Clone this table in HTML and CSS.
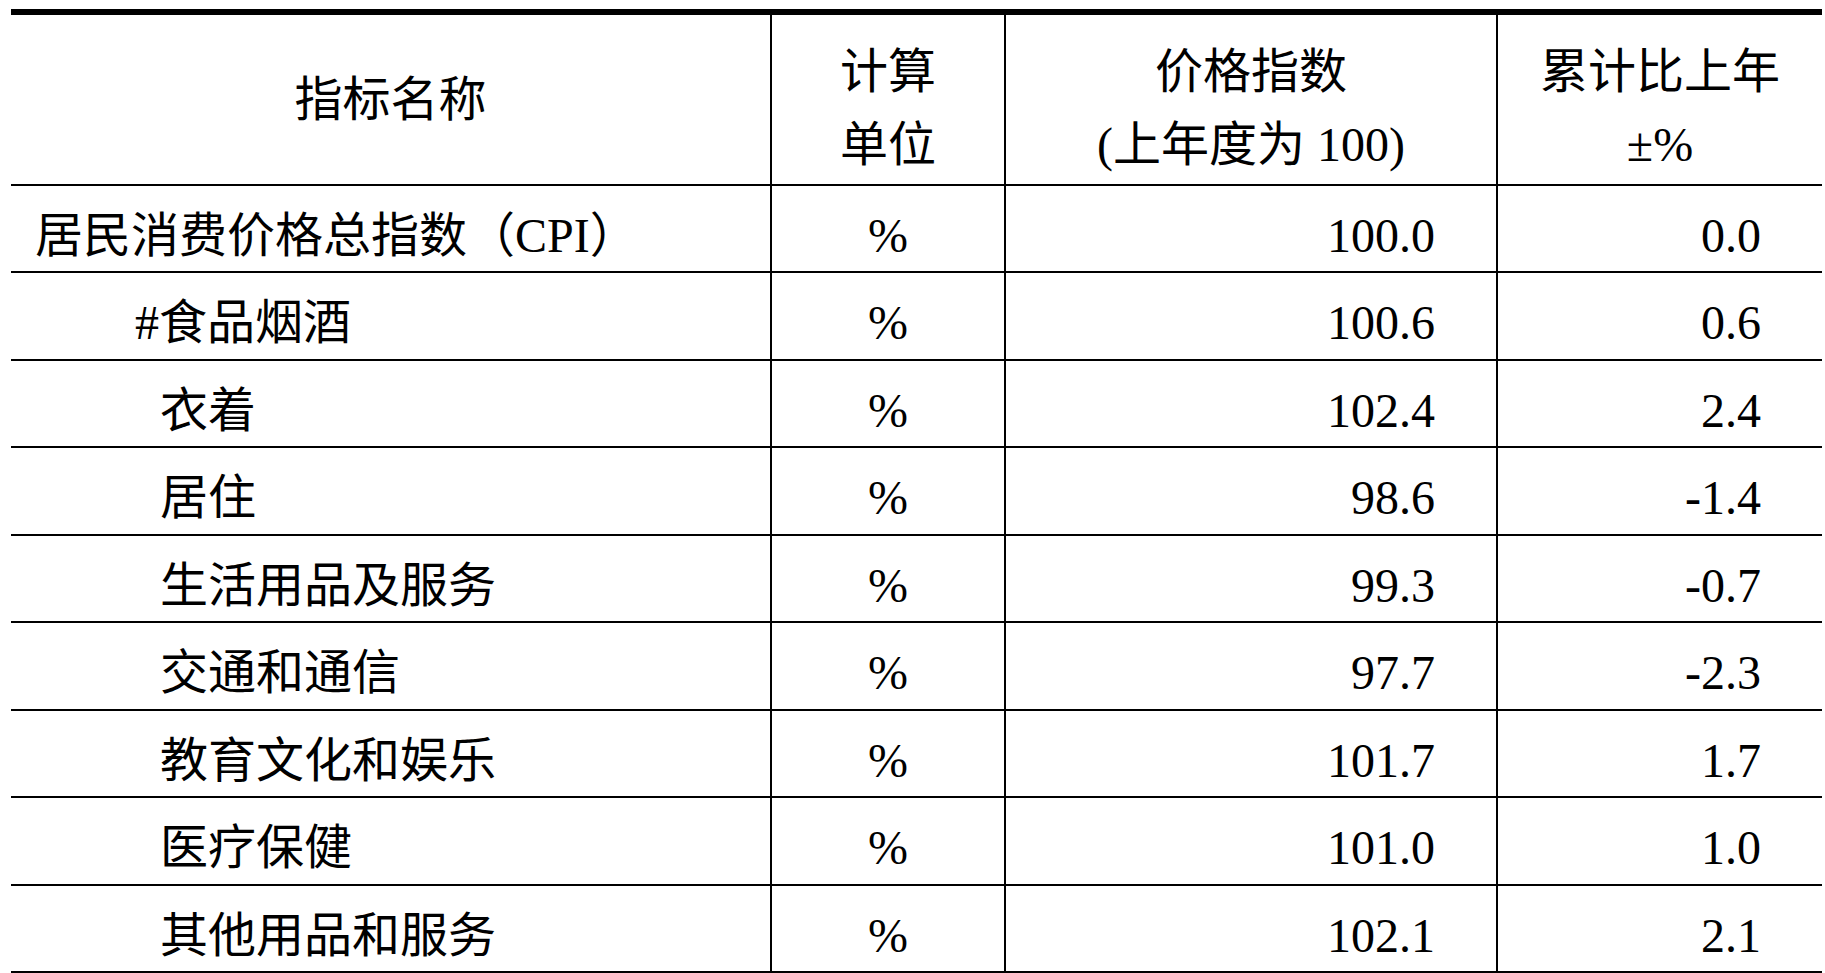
FILE: index.html
```html
<!DOCTYPE html>
<html lang="zh-CN">
<head>
<meta charset="utf-8">
<title>居民消费价格指数</title>
<link rel="stylesheet" href="styles.css">
</head>
<body>
<div class="page">
  <table class="cpi">
    <colgroup>
      <col class="c1"><col class="c2"><col class="c3"><col class="c4">
    </colgroup>
    <thead>
      <tr>
        <th class="name">指标名称</th>
        <th>计算<br>单位</th>
        <th>价格指数<br>(上年度为 100)</th>
        <th>累计比上年<br>±%</th>
      </tr>
    </thead>
    <tbody>
      <tr><td class="name">居民消费价格总指数（CPI）</td><td class="unit">%</td><td class="num">100.0</td><td class="num">0.0</td></tr>
      <tr><td class="name hash">#食品烟酒</td><td class="unit">%</td><td class="num">100.6</td><td class="num">0.6</td></tr>
      <tr><td class="name sub">衣着</td><td class="unit">%</td><td class="num">102.4</td><td class="num">2.4</td></tr>
      <tr><td class="name sub">居住</td><td class="unit">%</td><td class="num">98.6</td><td class="num">-1.4</td></tr>
      <tr><td class="name sub">生活用品及服务</td><td class="unit">%</td><td class="num">99.3</td><td class="num">-0.7</td></tr>
      <tr><td class="name sub">交通和通信</td><td class="unit">%</td><td class="num">97.7</td><td class="num">-2.3</td></tr>
      <tr><td class="name sub">教育文化和娱乐</td><td class="unit">%</td><td class="num">101.7</td><td class="num">1.7</td></tr>
      <tr><td class="name sub">医疗保健</td><td class="unit">%</td><td class="num">101.0</td><td class="num">1.0</td></tr>
      <tr><td class="name sub">其他用品和服务</td><td class="unit">%</td><td class="num">102.1</td><td class="num">2.1</td></tr>
    </tbody>
  </table>
</div>
</body>
</html>
```

FILE: styles.css
```css
html, body {
  margin: 0;
  padding: 0;
  background: #ffffff;
}

.page {
  padding: 9px 3px 0 11px;
}

.cpi {
  border-collapse: separate;
  border-spacing: 0;
  table-layout: fixed;
  width: 1811px;
  border-top: 6px solid #000;
  font-family: "Liberation Serif", "Noto Sans CJK SC", serif;
  font-size: 48px;
  color: #000;
}

.c1 { width: 759px; }
.c2 { width: 234px; }
.c3 { width: 492px; }
.c4 { width: 326px; }

.cpi th,
.cpi td {
  padding: 0;
  border-bottom: 2px solid #000;
  font-weight: normal;
  white-space: nowrap;
}

.cpi th + th,
.cpi td + td {
  border-left: 2px solid #000;
}

.cpi thead th {
  height: 171px;
  box-sizing: border-box;
  line-height: 73px;
  vertical-align: top;
  padding-top: 20px;
  text-align: center;
}

.cpi thead th.name {
  vertical-align: middle;
  padding-top: 0;
}

.cpi tbody td {
  height: 87.44px;
  box-sizing: border-box;
  line-height: 48px;
  vertical-align: top;
  padding-top: 26px;
}

.cpi td.name {
  text-align: left;
  padding-left: 24px;
}

.cpi td.hash {
  padding-left: 124px;
}

.cpi td.sub {
  padding-left: 149px;
}

.cpi td.unit {
  text-align: center;
}

.cpi td.num {
  text-align: right;
  padding-right: 61px;
}
```
